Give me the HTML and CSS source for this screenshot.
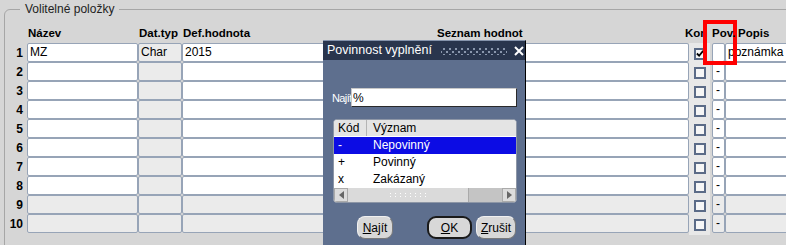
FILE: index.html
```html
<!DOCTYPE html>
<html>
<head>
    <meta charset="utf-8">
    <link rel="stylesheet" href="styles.css">
    <title>Volitelné položky</title>
</head>
<body>
    <fieldset class="group">
        <legend>Volitelné položky</legend>

        <div class="row head">
            <span></span>
            <span>Název</span>
            <span>Dat.typ</span>
            <span>Def.hodnota</span>
            <span class="head-list">Seznam hodnot</span>
            <span class="head-kon">Kon</span>
            <span class="head-pov">Pov.</span>
            <span class="head-popis">Popis</span>
        </div>

        <div class="row">
            <span class="num">1</span>
            <span class="cell">MZ</span>
            <span class="cell gray">Char</span>
            <span class="cell">2015</span>
            <span class="cell"></span>
            <span class="kon"><span class="check"><svg width="9" height="9" viewBox="0 0 9 9"><path d="M1 4.5 L3.5 7 L8 1.5" fill="none" stroke="#000" stroke-width="2"/></svg></span></span>
            <span class="cell pov"></span>
            <span class="cell">poznámka</span>
        </div>
        <div class="row">
            <span class="num">2</span>
            <span class="cell"></span><span class="cell gray"></span><span class="cell"></span><span class="cell"></span>
            <span class="kon"><span class="check"></span></span>
            <span class="cell pov">-</span><span class="cell"></span>
        </div>
        <div class="row">
            <span class="num">3</span>
            <span class="cell"></span><span class="cell gray"></span><span class="cell"></span><span class="cell"></span>
            <span class="kon"><span class="check"></span></span>
            <span class="cell pov">-</span><span class="cell"></span>
        </div>
        <div class="row">
            <span class="num">4</span>
            <span class="cell"></span><span class="cell gray"></span><span class="cell"></span><span class="cell"></span>
            <span class="kon"><span class="check"></span></span>
            <span class="cell pov">-</span><span class="cell"></span>
        </div>
        <div class="row">
            <span class="num">5</span>
            <span class="cell"></span><span class="cell gray"></span><span class="cell"></span><span class="cell"></span>
            <span class="kon"><span class="check"></span></span>
            <span class="cell pov">-</span><span class="cell"></span>
        </div>
        <div class="row">
            <span class="num">6</span>
            <span class="cell"></span><span class="cell gray"></span><span class="cell"></span><span class="cell"></span>
            <span class="kon"><span class="check"></span></span>
            <span class="cell pov">-</span><span class="cell"></span>
        </div>
        <div class="row">
            <span class="num">7</span>
            <span class="cell"></span><span class="cell gray"></span><span class="cell"></span><span class="cell"></span>
            <span class="kon"><span class="check"></span></span>
            <span class="cell pov">-</span><span class="cell"></span>
        </div>
        <div class="row">
            <span class="num">8</span>
            <span class="cell"></span><span class="cell gray"></span><span class="cell"></span><span class="cell"></span>
            <span class="kon"><span class="check"></span></span>
            <span class="cell pov">-</span><span class="cell"></span>
        </div>
        <div class="row off">
            <span class="num">9</span>
            <span class="cell"></span><span class="cell gray"></span><span class="cell"></span><span class="cell"></span>
            <span class="kon"><span class="check"></span></span>
            <span class="cell pov">-</span><span class="cell"></span>
        </div>
        <div class="row off">
            <span class="num">10</span>
            <span class="cell"></span><span class="cell gray"></span><span class="cell"></span><span class="cell"></span>
            <span class="kon"><span class="check"></span></span>
            <span class="cell pov">-</span><span class="cell"></span>
        </div>
    </fieldset>

    <!-- LOV dialog floating over the grid -->
    <div class="dialog">
        <div class="dialog-title">
            <span class="dialog-name">Povinnost vyplnění</span>
            <span class="grip"></span>
            <svg class="close" width="10" height="10" viewBox="0 0 10 10"><path d="M1 1 L9 9 M9 1 L1 9" stroke="#fff" stroke-width="2"/></svg>
        </div>
        <div class="dialog-body">
            <div class="find">
                <label for="findInput">Najít</label>
                <input type="text" id="findInput" value="%">
            </div>
            <div class="list">
                <div class="list-row list-head">
                    <span class="col-code">Kód</span>
                    <span class="col-text">Význam</span>
                </div>
                <div class="list-row selected">
                    <span class="col-code">-</span>
                    <span class="col-text">Nepovinný</span>
                </div>
                <div class="list-row">
                    <span class="col-code">+</span>
                    <span class="col-text">Povinný</span>
                </div>
                <div class="list-row">
                    <span class="col-code">x</span>
                    <span class="col-text">Zakázaný</span>
                </div>
                <div class="hscroll">
                    <span class="arrow"><svg width="5" height="8" viewBox="0 0 5 8"><path d="M5 0 L0 4 L5 8 Z" fill="#666"/></svg></span>
                    <span class="thumb"><span class="thumb-grip"></span></span>
                    <span class="track"></span>
                    <span class="arrow"><svg width="5" height="8" viewBox="0 0 5 8"><path d="M0 0 L5 4 L0 8 Z" fill="#666"/></svg></span>
                </div>
            </div>
            <div class="buttons">
                <button class="btn btn-find"><u>N</u>ajít</button>
                <button class="btn btn-ok"><u>O</u>K</button>
                <button class="btn"><u>Z</u>rušit</button>
            </div>
        </div>
    </div>

    <div class="mark"></div>
</body>
</html>
```

FILE: styles.css
```css
body {
    margin: 0;
    background-color: #d6d6d6;
    font-family: "Liberation Sans", Arial, sans-serif;
    font-size: 11px;
    color: #000;
    overflow: hidden;
    width: 786px;
    height: 245px;
}

.group {
    margin: 2px 0 0 4px;
    padding: 10px 0 0 0;
    width: 820px;
    height: 260px;
    border: 1px solid #a6a6a6;
    border-top-left-radius: 6px;
}
.group legend {
    margin-left: 15px;
    padding: 0 5px;
    line-height: 14px;
    font-size: 12px;
    color: #222;
}

.row {
    display: grid;
    grid-template-columns: 22px 111px 44px 225px 282px 23px 13px 90px;
    height: 19px;
}
.row.head {
    height: 17px;
    font-weight: bold;
    font-size: 11.5px;
    line-height: 14px;
}
.row.head span {
    padding-left: 1px;
    white-space: nowrap;
}
.head-list {
    padding-left: 30px !important;
}
.head-kon {
    margin-left: -5px;
}
.head-pov {
    margin-left: -1px;
    position: relative;
    z-index: 1;
}
.head-popis {
    padding-left: 13px !important;
}

.num {
    font-weight: bold;
    font-size: 12px;
    text-align: right;
    padding-right: 4px;
    line-height: 21px;
}
.cell {
    box-sizing: border-box;
    height: 19px;
    border: 1px solid #97a4b7;
    border-radius: 2px;
    background-color: #fff;
    padding-left: 2px;
    font-size: 12px;
    line-height: 17px;
    white-space: nowrap;
    overflow: hidden;
}
.cell.gray,
.row.off .cell {
    background-color: #ebebeb;
}
.cell.pov {
    padding-left: 3px;
}

.kon {
    width: 21px;
    background-color: #e8e8e8;
    display: flex;
    align-items: center;
    justify-content: center;
}
.check {
    box-sizing: border-box;
    width: 12px;
    height: 12px;
    border: 2px solid #5b6b87;
    background-color: #f6f6f6;
    display: flex;
    align-items: center;
    justify-content: center;
}

/* dialog */
.dialog {
    position: absolute;
    left: 323px;
    top: 40px;
    width: 202px;
    height: 215px;
    background-color: #5e6f8e;
    border-right: 1px solid #000;
    border-top: 1px solid #8593ab;
}
.dialog-title {
    height: 19px;
    background-color: #29354d;
    color: #fff;
    font-size: 12.5px;
    line-height: 19px;
    padding-left: 4px;
    display: flex;
    align-items: center;
    white-space: nowrap;
}
.dialog-name {
    flex-shrink: 0;
}
.grip {
    flex-shrink: 0;
    width: 66px;
    height: 8px;
    margin-left: 9px;
    background-image: radial-gradient(circle, #8a97ad 0.8px, transparent 1px),
                      radial-gradient(circle, #8a97ad 0.8px, transparent 1px);
    background-size: 6px 6px;
    background-position: 0 -1px, 3px 2px;
}
.close {
    flex-shrink: 0;
    margin-left: 7px;
}
.dialog-body {
    padding: 28px 0 0 10px;
}
.find {
    display: flex;
    align-items: center;
}
.find label {
    color: #fff;
    width: 19px;
    margin-left: -1px;
    font-size: 11px;
    letter-spacing: -0.6px;
    white-space: nowrap;
}
.find input {
    box-sizing: border-box;
    width: 166px;
    height: 19px;
    margin: 0;
    padding: 0 0 0 1px;
    border: 1px solid #c8c8c8;
    border-right-color: #2a2a2a;
    border-bottom-color: #2a2a2a;
    font-family: inherit;
    font-size: 12px;
    outline: none;
}

.list {
    margin-top: 12px;
    width: 184px;
    height: 84px;
    box-sizing: border-box;
    background-color: #fff;
    border: 1px solid #8d96a6;
    border-radius: 4px;
    overflow: hidden;
    display: flex;
    flex-direction: column;
    font-size: 12px;
}
.list-row {
    display: flex;
    height: 17px;
    line-height: 17px;
}
.list-head {
    height: 16px;
    line-height: 16px;
    background-color: #e4e4e4;
    border-bottom: 1px solid #fff;
}
.col-code {
    width: 33px;
    padding-left: 4px;
    box-sizing: border-box;
}
.list-head .col-code {
    border-right: 1px solid #b4b4b4;
}
.col-text {
    padding-left: 6px;
}
.selected {
    background-color: #0c0ce4;
    color: #fff;
}
.hscroll {
    margin-top: auto;
    height: 14px;
    display: flex;
    background-color: #c4c4c4;
}
.arrow {
    width: 14px;
    background-color: #dcdcdc;
    border: 1px solid #aaa;
    box-sizing: border-box;
    display: flex;
    align-items: center;
    justify-content: center;
}
.thumb {
    width: 120px;
    background-color: #dadada;
    border-right: 1px solid #aaa;
    display: flex;
    align-items: center;
    justify-content: center;
}
.thumb-grip {
    width: 40px;
    height: 6px;
    background-image: radial-gradient(circle, #fff 0.8px, transparent 1px);
    background-size: 5px 3px;
}
.track {
    flex: 1;
}

.buttons {
    display: flex;
    margin-top: 13px;
    padding-left: 24px;
}
.btn {
    box-sizing: border-box;
    height: 23px;
    width: 40px;
    padding: 0;
    background-color: #d8d8d8;
    border: 1px solid #7a7a7a;
    border-top-color: #f0f0f0;
    border-left-color: #f0f0f0;
    border-radius: 8px;
    font-family: inherit;
    font-size: 12px;
    color: #000;
}
.btn-find {
    width: 36px;
    margin-right: 34px;
}
.btn-ok {
    width: 45px;
    margin-right: 4px;
    border: 2px solid #1a1a1a;
    border-radius: 9px;
}

/* red highlight drawn over the Pov. column */
.mark {
    position: absolute;
    left: 703px;
    top: 20px;
    width: 34px;
    height: 45px;
    box-sizing: border-box;
    border: 4px solid #ff0000;
}
```
